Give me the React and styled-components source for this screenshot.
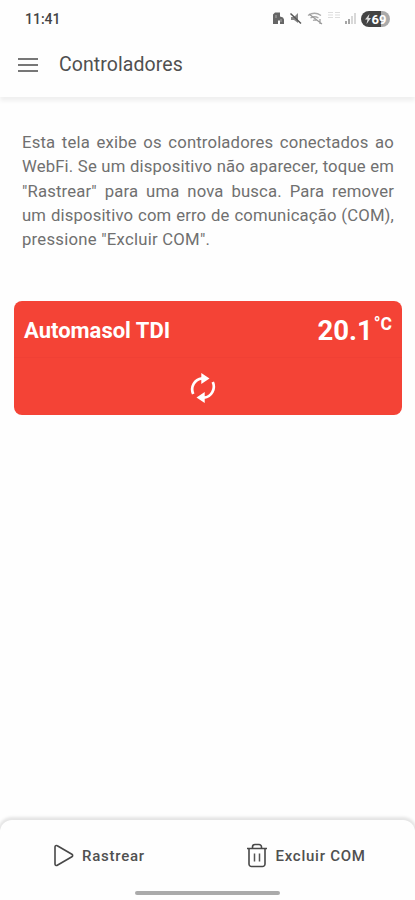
import React from "react";

import styled, { createGlobalStyle } from "styled-components";

const App = () => {
  return (
    <ScreenStyled>
      <GlobalStyle />
      <StatusBar />

      <HeaderStyled>
        <MenuButtonStyled aria-label="Menu">
          <span />
          <span />
          <span />
        </MenuButtonStyled>
        <h1>Controladores</h1>
      </HeaderStyled>

      <MainStyled>
        <DescriptionStyled>
          Esta tela exibe os controladores conectados ao WebFi. Se um
          dispositivo não aparecer, toque em "Rastrear" para uma nova busca.
          Para remover um&nbsp;dispositivo com erro de comunicação (COM),{" "}
          <span>pressione "Excluir COM".</span>
        </DescriptionStyled>

        <CardStyled>
          <CardHeaderStyled>
            <h2>Automasol TDI</h2>
            <TemperatureStyled>
              20.1<sup>°C</sup>
            </TemperatureStyled>
          </CardHeaderStyled>
          <CardBodyStyled>
            <SyncIcon />
          </CardBodyStyled>
        </CardStyled>
      </MainStyled>

      <FooterStyled>
        <ActionsStyled>
          <ActionStyled $left={53}>
            <PlayIcon />
            Rastrear
          </ActionStyled>
          <ActionStyled $left={38}>
            <TrashIcon />
            Excluir COM
          </ActionStyled>
        </ActionsStyled>
        <HomeIndicatorStyled />
      </FooterStyled>
    </ScreenStyled>
  );
};

const StatusBar = () => (
  <StatusBarStyled>
    <time>11:41</time>
    <StatusIconsStyled>
      <svg width="88" height="16" viewBox="0 0 88 16" fill="none">
        {/* building */}
        <path d="M1 13V3.5L3 1.5h5v4l3 1 1 2V13H8V9.5H6V13z" fill="#666" />
        <path d="M4 4v3M9 8v3" stroke="#aaa" />
        {/* muted speaker */}
        <path d="M19 6h3l4-4v10l-4-3h-3z" fill="#888" />
        <path d="M18.5 2.5L29 12.5" stroke="#555" strokeWidth="1.5" />
        {/* wifi */}
        <path
          d="M36 4.5q6.5-4.5 13 0M38.5 7q4-2.5 8 0M41 9.5q2-1 3.5 0"
          stroke="#aaa"
          strokeWidth="1.3"
        />
        <path d="M37 3L50 13M48 8v5" stroke="#999" strokeWidth="1.2" />
        {/* mobile network */}
        <path
          d="M56 1.5h5M56 4h5M56 6.5h5M63 1.5h5M63 4h5M63 6.5h5"
          stroke="#ddd"
        />
        {/* signal bars */}
        <path d="M74 10v3M77 8v5" stroke="#888" strokeWidth="1.5" />
        <path d="M80 5v8M83 2v11" stroke="#ccc" strokeWidth="1.5" />
      </svg>
      <BatteryStyled>
        <svg width="6" height="10" viewBox="0 0 6 10">
          <path d="M4.5 0L0 5.5h2.5L1.5 10 6 4H3.5z" fill="#ddd" />
        </svg>
        69
      </BatteryStyled>
    </StatusIconsStyled>
  </StatusBarStyled>
);

const SyncIcon = () => (
  <svg width="28" height="30" viewBox="0 0 28 30" fill="none">
    <path
      d="M4.2 21A11.2 11.2 0 0 1 13 5.3M23.8 9A11.2 11.2 0 0 1 15 24.7"
      stroke="#fff"
      strokeWidth="2.7"
    />
    <path d="M12.3 0v11l8.2-5.5zM15.7 30V19l-8.2 5.5z" fill="#fff" />
  </svg>
);

const PlayIcon = () => (
  <svg width="21" height="23" viewBox="0 0 21 23" fill="none">
    <path
      d="M2 3v17a1.5 1.5 0 0 0 2.3 1.3l14.6-8.5a1.5 1.5 0 0 0 0-2.6L4.3 1.7A1.5 1.5 0 0 0 2 3z"
      stroke="#484848"
      strokeWidth="1.6"
    />
  </svg>
);

const TrashIcon = () => (
  <svg width="22" height="25" viewBox="0 0 22 25" fill="none">
    <path
      d="M1 5.5h20M3 5.5V21a2.5 2.5 0 0 0 2.5 2.5h11A2.5 2.5 0 0 0 19 21V5.5M6.5 5.5V4a2.5 2.5 0 0 1 2.5-2.5h4A2.5 2.5 0 0 1 15.5 4v1.5"
      stroke="#484848"
      strokeWidth="1.6"
    />
    <path d="M8.5 10.5v8M13.5 10.5v8" stroke="#555" strokeWidth="1.5" />
  </svg>
);

const GlobalStyle = createGlobalStyle`
  * {
    box-sizing: border-box;
  }

  body {
    margin: 0;
    background: #fefefe;
    font-family: Roboto, "Liberation Sans", sans-serif;
  }

  h1,
  h2,
  p {
    margin: 0;
  }
`;

const ScreenStyled = styled.div`
  display: flex;
  flex-direction: column;
  height: 900px;
  overflow: hidden;
`;

const StatusBarStyled = styled.div`
  display: flex;
  align-items: center;
  justify-content: space-between;
  height: 38px;
  padding: 0 25px;

  time {
    color: #444;
    font-size: 14px;
    font-weight: 500;
  }
`;

const StatusIconsStyled = styled.div`
  display: flex;
  align-items: center;
  gap: 1px;
`;

const BatteryStyled = styled.div`
  display: flex;
  align-items: center;
  justify-content: center;
  gap: 1px;
  width: 29px;
  height: 16px;
  border-radius: 8px;
  background: linear-gradient(90deg, #444 69%, #aaa 69%);
  color: #fff;
  font-size: 13px;
  font-weight: 700;
`;

const HeaderStyled = styled.header`
  display: flex;
  align-items: center;
  gap: 22px;
  height: 59px;
  padding: 0 18px 6px;
  box-shadow: 0 4px 4px rgba(0, 0, 0, 0.06);

  h1 {
    color: #505050;
    font-size: 19.5px;
    font-weight: 400;
    letter-spacing: 0.08px;
  }
`;

const MenuButtonStyled = styled.button`
  display: flex;
  flex-direction: column;
  gap: 4px;
  width: 20px;
  margin-right: -1px;
  padding: 0;
  border: 0;
  background: none;

  span {
    width: 20px;
    height: 2px;
    background: #777;
  }
`;

const MainStyled = styled.main`
  flex: 1;
  padding: 34px 13px 0 14px;
`;

const DescriptionStyled = styled.p`
  padding: 0 8px;
  color: #707070;
  font-size: 16.7px;
  letter-spacing: 0.15px;
  word-spacing: -1.3px;
  line-height: 24.3px;
  text-align: justify;

  span {
    letter-spacing: 0.25px;
    word-spacing: 0;
  }
`;

const CardStyled = styled.section`
  margin-top: 48.5px;
  height: 114px;
  border-radius: 8px;
  background: #f44336;
  color: #fff;
`;

const CardHeaderStyled = styled.div`
  display: flex;
  align-items: center;
  justify-content: space-between;
  height: 57px;
  padding: 4px 10px 0;
  border-bottom: 1px solid #f04035;

  h2 {
    font-size: 22px;
    font-weight: 700;
  }
`;

const TemperatureStyled = styled.div`
  font-size: 27.5px;
  font-weight: 700;
  line-height: 32px;

  sup {
    margin-left: 1px;
    font-size: 17.5px;
    line-height: 0;
    vertical-align: 10px;
  }
`;

const CardBodyStyled = styled.div`
  display: flex;
  justify-content: center;
  padding: 15px 11px 0 0;
`;

const FooterStyled = styled.footer`
  display: flex;
  flex-direction: column;
  align-items: center;
  height: 80px;
  border-radius: 12px 12px 0 0;
  background: #fefefe;
  box-shadow: 0 -1px 3px 2px rgba(0, 0, 0, 0.1);
`;

const ActionsStyled = styled.div`
  display: grid;
  grid-template-columns: 1fr 1fr;
  width: 100%;
  height: 71px;
`;

const ActionStyled = styled.button`
  display: flex;
  align-items: center;
  gap: 8px;
  padding: 0 0 0 ${({ $left }) => $left}px;
  border: 0;
  background: none;
  color: #505050;
  font-family: inherit;
  font-size: 15px;
  font-weight: 500;
  letter-spacing: 0.75px;
`;

const HomeIndicatorStyled = styled.div`
  width: 145px;
  height: 4px;
  border-radius: 2px;
  background: #aaa;
`;

export default App;
